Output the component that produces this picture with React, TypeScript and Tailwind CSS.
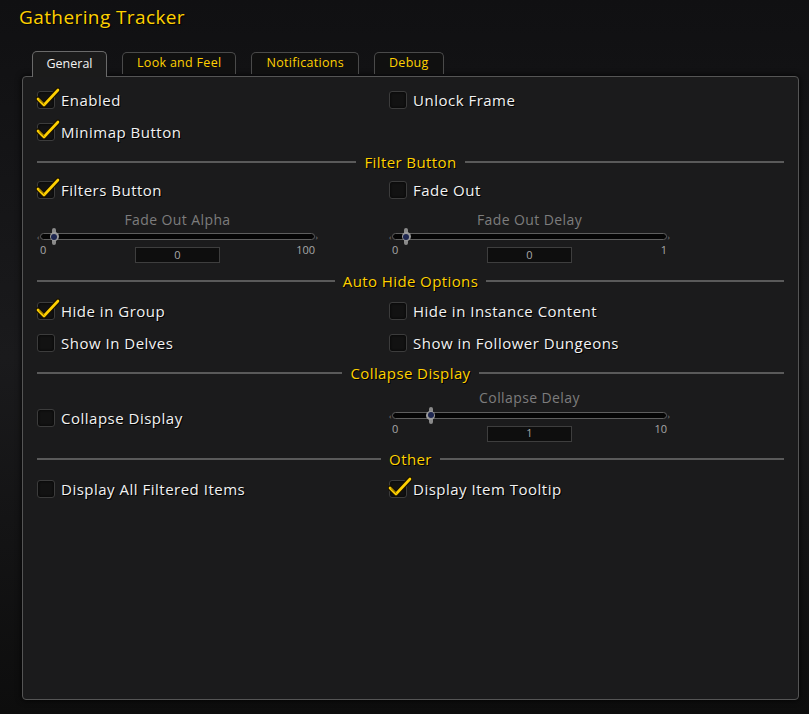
import React from 'react';

const FONT = { fontFamily: '"Open Sans", "Liberation Sans", sans-serif' };

function Check({ checked, label }: { checked: boolean; label: string }) {
  return (
    <div className="flex items-center gap-[6px]">
      <div className="relative w-[18px] h-[18px] rounded-[3px] border border-[#3c3c3c] bg-[#121212] shadow-[inset_0_0_3px_rgba(0,0,0,0.9)]">
        {checked && (
          <svg className="absolute -left-[2px] -top-[6px]" width="24" height="24" viewBox="0 0 24 24">
            <path d="M2 13 L8 19 L22 4" fill="none" stroke="#1a1200" strokeWidth="5" strokeLinecap="round" strokeLinejoin="round" />
            <path d="M2 13 L8 19 L22 4" fill="none" stroke="#ffd100" strokeWidth="2.6" strokeLinecap="round" strokeLinejoin="round" />
            <path d="M3 13.5 L8 18" fill="none" stroke="#8a6a00" strokeWidth="1" strokeLinecap="round" />
          </svg>
        )}
      </div>
      <span className="text-[15px] tracking-[0.5px] text-[#f2f2f2] [text-shadow:1px_1px_0_#000]">{label}</span>
    </div>
  );
}

function Header({ title }: { title: string }) {
  return (
    <div className="h-[28px] flex items-center gap-2">
      <div className="flex-1 h-[2px] bg-[#5a5a5a]" />
      <span className="text-[15px] tracking-[0.4px] text-[#ffd100] [text-shadow:1px_1px_0_#000]">{title}</span>
      <div className="flex-1 h-[2px] bg-[#5a5a5a]" />
    </div>
  );
}

function Slider({ label, min, max, value, frac }: { label: string; min: string; max: string; value: string; frac: number }) {
  return (
    <div className="w-[281px] flex flex-col">
      <div className="h-[20px] flex items-center justify-center text-[14px] tracking-[0.4px] text-[#7d7d7d]">{label}</div>
      <div className="relative mt-[4px] h-[7px]">
        <div className="absolute inset-x-[3px] inset-y-0 rounded-full bg-[#050505] border border-[#5e5e5e]" />
        <span className="absolute left-0 top-[-1px] text-[8px] leading-[9px] text-[#888]">‹</span>
        <span className="absolute right-0 top-[-1px] text-[8px] leading-[9px] text-[#888]">›</span>
        <div
          className="absolute top-[-5px] w-[10px] h-[17px] flex items-center justify-center"
          style={{ left: 12 + frac * (281 - 34) }}
        >
          <div className="absolute w-[4px] h-[17px] bg-[#8a8a8a] rounded-full" />
          <div className="absolute w-[9px] h-[9px] rounded-full bg-[#9a9a9a]" />
          <div className="absolute w-[6px] h-[6px] rounded-full bg-[#1d2650]" />
        </div>
      </div>
      <div className="relative mt-[7px] h-[16px]">
        <span className="absolute left-[3px] top-[-5px] text-[11px] text-[#a8a8a8]">{min}</span>
        <span className="absolute right-[3px] top-[-5px] text-[11px] text-[#a8a8a8]">{max}</span>
        <div className="mx-auto w-[85px] h-[16px] border border-[#3e3e3e] bg-[#0e0e0e] flex items-center justify-center text-[11px] text-[#a8a8a8]">
          {value}
        </div>
      </div>
    </div>
  );
}

function Row({ children }: { children: React.ReactNode }) {
  return <div className="h-[32px] flex items-center">{children}</div>;
}

function Col({ children }: { children?: React.ReactNode }) {
  return <div className="w-[352px] flex items-center">{children}</div>;
}

const tabs = ['General', 'Look and Feel', 'Notifications', 'Debug'];

export default function App() {
  return (
    <div
      className="w-[809px] h-[714px] bg-gradient-to-b from-[#101012] via-[#1a1a1c] to-[#0d0d0d] relative overflow-hidden"
      style={FONT}
    >
      <div className="pl-[19px] pt-[3px] h-[48px] text-[19px] tracking-[0.4px] text-[#ffd100] [text-shadow:1px_1px_1px_#000]">
        Gathering Tracker
      </div>

      <div className="pl-[32px] flex items-end gap-[15px] h-[28px] relative z-10">
        {tabs.map((t, i) =>
          i === 0 ? (
            <div
              key={t}
              className="w-[75px] h-[26px] mb-[-1px] rounded-t-[5px] border border-b-0 border-[#6a6a6a] bg-[#1b1b1b] flex items-center justify-center text-[12.5px] text-[#f2f2f2]"
            >
              {t}
            </div>
          ) : (
            <div
              key={t}
              className="px-[14px] h-[22px] mb-[2px] rounded-t-[5px] border border-b-0 border-[#4a4a4a] bg-[#101010] flex items-center justify-center text-[12.5px] text-[#ffd100] tracking-[0.3px]"
            >
              {t}
            </div>
          )
        )}
      </div>

      <div className="ml-[22px] w-[777px] h-[624px] rounded-[4px] border border-[#555] bg-[#1b1b1c] shadow-[0_0_6px_rgba(0,0,0,0.9)] px-[14px] pt-[7px]">
        <Row>
          <Col><Check checked label="Enabled" /></Col>
          <Col><Check checked={false} label="Unlock Frame" /></Col>
        </Row>
        <Row>
          <Col><Check checked label="Minimap Button" /></Col>
        </Row>
        <Header title="Filter Button" />
        <div className="h-[28px] flex items-center">
          <Col><Check checked label="Filters Button" /></Col>
          <Col><Check checked={false} label="Fade Out" /></Col>
        </div>
        <div className="h-[63px] pt-[1px] flex">
          <Col><Slider label="Fade Out Alpha" min="0" max="100" value="0" frac={0} /></Col>
          <Col><Slider label="Fade Out Delay" min="0" max="1" value="0" frac={0} /></Col>
        </div>
        <Header title="Auto Hide Options" />
        <Row>
          <Col><Check checked label="Hide in Group" /></Col>
          <Col><Check checked={false} label="Hide in Instance Content" /></Col>
        </Row>
        <Row>
          <Col><Check checked={false} label="Show In Delves" /></Col>
          <Col><Check checked={false} label="Show in Follower Dungeons" /></Col>
        </Row>
        <Header title="Collapse Display" />
        <div className="h-[61px] -mt-[3px] flex">
          <div className="w-[352px] flex items-center pt-[7px]">
            <Check checked={false} label="Collapse Display" />
          </div>
          <Col><Slider label="Collapse Delay" min="0" max="10" value="1" frac={0.1} /></Col>
        </div>
        <Header title="Other" />
        <Row>
          <Col><Check checked={false} label="Display All Filtered Items" /></Col>
          <Col><Check checked label="Display Item Tooltip" /></Col>
        </Row>
      </div>
    </div>
  );
}
